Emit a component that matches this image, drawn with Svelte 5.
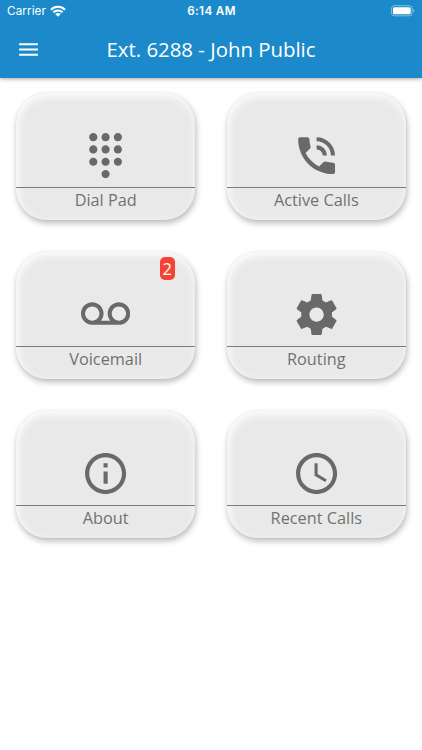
<script>
  const tiles = [
    {
      label: 'Dial Pad',
      path: 'M12 19c-1.1 0-2 .9-2 2s.9 2 2 2 2-.9 2-2-.9-2-2-2zM6 1c-1.1 0-2 .9-2 2s.9 2 2 2 2-.9 2-2-.9-2-2-2zm0 6c-1.1 0-2 .9-2 2s.9 2 2 2 2-.9 2-2-.9-2-2-2zm0 6c-1.1 0-2 .9-2 2s.9 2 2 2 2-.9 2-2-.9-2-2-2zm12-8c1.1 0 2-.9 2-2s-.9-2-2-2-2 .9-2 2 .9 2 2 2zm-6 8c-1.1 0-2 .9-2 2s.9 2 2 2 2-.9 2-2-.9-2-2-2zm6 0c-1.1 0-2 .9-2 2s.9 2 2 2 2-.9 2-2-.9-2-2-2zm0-6c-1.1 0-2 .9-2 2s.9 2 2 2 2-.9 2-2-.9-2-2-2zm-6 0c-1.1 0-2 .9-2 2s.9 2 2 2 2-.9 2-2-.9-2-2-2zm0-6c-1.1 0-2 .9-2 2s.9 2 2 2 2-.9 2-2-.9-2-2-2z'
    },
    {
      label: 'Active Calls',
      path: 'M20 15.5c-1.25 0-2.45-.2-3.57-.57-.35-.11-.74-.03-1.02.24l-2.2 2.2c-2.83-1.44-5.15-3.75-6.59-6.59l2.2-2.21c.28-.26.36-.65.25-1C8.7 6.45 8.5 5.25 8.5 4c0-.55-.45-1-1-1H4c-.55 0-1 .45-1 1 0 9.39 7.61 17 17 17 .55 0 1-.45 1-1v-3.5c0-.55-.45-1-1-1zM19 12h2c0-4.97-4.03-9-9-9v2c3.87 0 7 3.13 7 7zm-4 0h2c0-2.76-2.24-5-5-5v2c1.66 0 3 1.34 3 3z'
    },
    {
      label: 'Voicemail',
      badge: 2,
      path: 'M18.5 6C15.46 6 13 8.46 13 11.5c0 1.33.47 2.55 1.26 3.5H9.74c.79-.95 1.26-2.17 1.26-3.5C11 8.46 8.54 6 5.5 6S0 8.46 0 11.5 2.46 17 5.5 17h13c3.04 0 5.5-2.46 5.5-5.5S21.54 6 18.5 6zm-13 9C3.57 15 2 13.43 2 11.5S3.57 8 5.5 8 9 9.57 9 11.5 7.43 15 5.5 15zm13 0c-1.93 0-3.5-1.57-3.5-3.5S16.57 8 18.5 8 22 9.57 22 11.5 20.43 15 18.5 15z'
    },
    {
      label: 'Routing',
      path: 'M19.43 12.98c.04-.32.07-.64.07-.98s-.03-.66-.07-.98l2.11-1.65c.19-.15.24-.42.12-.64l-2-3.46c-.12-.22-.39-.3-.61-.22l-2.49 1c-.52-.4-1.08-.73-1.69-.98l-.38-2.65C14.46 2.18 14.25 2 14 2h-4c-.25 0-.46.18-.49.42l-.38 2.65c-.61.25-1.17.59-1.69.98l-2.49-1c-.23-.09-.49 0-.61.22l-2 3.46c-.13.22-.07.49.12.64l2.11 1.65c-.04.32-.07.65-.07.98s.03.66.07.98l-2.11 1.65c-.19.15-.24.42-.12.64l2 3.46c.12.22.39.3.61.22l2.49-1c.52.4 1.08.73 1.69.98l.38 2.65c.03.24.24.42.49.42h4c.25 0 .46-.18.49-.42l.38-2.65c.61-.25 1.17-.59 1.69-.98l2.49 1c.23.09.49 0 .61-.22l2-3.46c.12-.22.07-.49-.12-.64l-2.11-1.65zM12 15.5c-1.93 0-3.5-1.57-3.5-3.5s1.57-3.5 3.5-3.5 3.5 1.57 3.5 3.5-1.57 3.5-3.5 3.5z'
    },
    {
      label: 'About',
      path: 'M11 17h2v-6h-2v6zm1-15C6.48 2 2 6.48 2 12s4.48 10 10 10 10-4.48 10-10S17.52 2 12 2zm0 18c-4.41 0-8-3.59-8-8s3.59-8 8-8 8 3.59 8 8-3.59 8-8 8zM11 9h2V7h-2v2z'
    },
    {
      label: 'Recent Calls',
      path: 'M11.99 2C6.47 2 2 6.48 2 12s4.47 10 9.99 10C17.52 22 22 17.52 22 12S17.52 2 11.99 2zM12 20c-4.42 0-8-3.58-8-8s3.58-8 8-8 8 3.58 8 8-3.58 8-8 8zm.5-13H11v6l5.25 3.15.75-1.23-4.5-2.67z'
    }
  ];
</script>

<div class="app">
  <header>
    <div class="status">
      <div class="carrier">
        <span>Carrier</span>
        <svg class="wifi" viewBox="0 0 16 12" fill="none" stroke="#fff" stroke-width="2.1">
          <path d="M1 4.7C4.9.7 11.1.7 15 4.7M3.4 7.3C6 4.8 10 4.8 12.6 7.3" />
          <path d="M5.2 9C6.8 7.5 9.2 7.5 10.8 9L8 11.8Z" fill="#fff" stroke="none" />
        </svg>
      </div>
      <time>6:14 AM</time>
      <div class="power">
        <svg class="battery" viewBox="0 0 26 12">
          <rect x=".5" y=".5" width="21.5" height="10.5" rx="3" fill="none" stroke="#fff" stroke-opacity=".48" />
          <rect x="2" y="2" width="18.5" height="7.5" rx="1.6" fill="#fff" />
          <path d="M23.2 4v3.6c1.5-.6 1.5-3 0-3.6z" fill="#fff" fill-opacity=".5" />
        </svg>
      </div>
    </div>
    <div class="toolbar">
      <button class="menu" aria-label="Menu">
        <svg viewBox="0 0 24 24"><path d="M3 18h18v-2H3v2zm0-5h18v-2H3v2zm0-7v2h18V6H3z" /></svg>
      </button>
      <h1>Ext. 6288 - John Public</h1>
    </div>
  </header>

  <main>
    {#each tiles as tile}
      <button class="tile">
        <span class="face">
          <svg viewBox="0 0 24 24"><path d={tile.path} /></svg>
        </span>
        <span class="label">{tile.label}</span>
        {#if tile.badge}
          <span class="badge">{tile.badge}</span>
        {/if}
      </button>
    {/each}
  </main>
</div>

<style>
  :global(body) {
    background: #fff;
  }
  .app {
    height: 750px;
    overflow: hidden;
    background: #fff;
    font-family: 'Open Sans', 'Noto Sans', sans-serif;
  }
  header {
    height: 77.5px;
    background: #1c8aca;
    color: #fff;
    box-shadow: 0 1px 4px rgba(0, 0, 0, 0.35);
  }
  .status {
    display: grid;
    grid-template-columns: 1fr auto 1fr;
    align-items: center;
    height: 22px;
    padding: 0 6px 0 7px;
    font-family: Inter, Roboto, sans-serif;
    font-size: 11.7px;
    line-height: 22px;
  }
  .carrier {
    display: flex;
    align-items: center;
    gap: 4px;
    letter-spacing: 0.1px;
  }
  .wifi {
    width: 16px;
    height: 12px;
  }
  time {
    font-weight: 600;
    letter-spacing: 0.35px;
  }
  .power {
    display: flex;
    justify-content: flex-end;
  }
  .battery {
    width: 25px;
    height: 12px;
  }
  button {
    border: 0;
    padding: 0;
    font: inherit;
  }
  .toolbar {
    display: grid;
    grid-template-columns: 57px 1fr 57px;
    align-items: center;
    height: 54px;
  }
  .menu {
    display: flex;
    justify-content: center;
    background: none;
  }
  .menu svg {
    width: 25px;
    height: 25px;
    fill: #fff;
  }
  h1 {
    margin: 0;
    text-align: center;
    font-size: 20.4px;
    font-weight: 400;
    line-height: 28px;
    white-space: nowrap;
  }
  main {
    display: grid;
    grid-template-columns: 1fr 1fr;
    grid-auto-rows: 127px;
    gap: 32px;
    padding: 15.8px 16.4px;
  }
  .tile {
    position: relative;
    display: flex;
    flex-direction: column;
    overflow: hidden;
    border-radius: 31px;
    background: #e9e9e9;
    color: #717171;
    box-shadow:
      1px 3px 6px rgba(0, 0, 0, 0.28),
      0 0 2px rgba(0, 0, 0, 0.05),
      inset 1.5px 3px 8px #fff;
  }
  .face {
    display: flex;
    align-items: center;
    justify-content: center;
    width: 100%;
    height: 95px;
    padding-top: 30px;
    box-sizing: border-box;
    border-bottom: 1px solid #7c7c7c;
  }
  .face svg {
    width: 49.2px;
    height: 49.2px;
    fill: #696969;
  }
  .label {
    width: 100%;
    font-size: 16.3px;
    line-height: 24px;
    text-align: center;
  }
  .badge {
    position: absolute;
    top: 5px;
    right: 20.5px;
    width: 14.5px;
    height: 23px;
    border-radius: 5px;
    background: #f44336;
    color: #fff;
    font-size: 16.4px;
    line-height: 23px;
    text-align: center;
  }
</style>
